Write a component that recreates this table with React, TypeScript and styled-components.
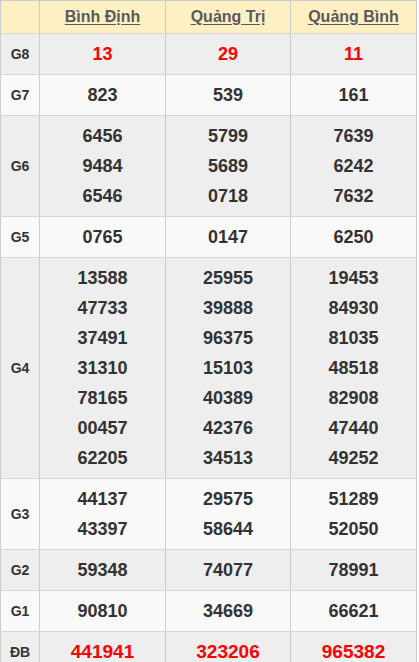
import React from "react";
import styled, { createGlobalStyle } from "styled-components";

const Global = createGlobalStyle`
  html, body { margin: 0; padding: 0; background: #fff; }
  body { font-family: "Liberation Sans", Arial, sans-serif; }
`;

const Table = styled.div`
  width: 417px;
  box-sizing: border-box;
  border-right: 1px solid #ccc;
  border-bottom: 1px solid #ccc;
`;

const Row = styled.div<{ $bg: string }>`
  display: grid;
  grid-template-columns: 39px 126px 125px 126px;
  background: ${(p) => p.$bg};
  border-top: 1px solid #d6d6d6;
`;

const HeaderRow = styled(Row)`
  height: 33px;
  box-sizing: border-box;
  border-top: 1px solid #ccc;
`;

const Cell = styled.div`
  border-left: 1px solid #ccc;
  display: flex;
  flex-direction: column;
  align-items: center;
  justify-content: center;
`;

const HeadCell = styled(Cell)`
  font-size: 16px;
  font-weight: bold;
  color: #5a5a5a;
`;

const HeadLink = styled.a`
  color: inherit;
  text-decoration: underline;
  text-underline-offset: 2px;
`;

const Label = styled(Cell)`
  font-size: 14px;
  font-weight: bold;
  color: #333;
`;

const NumCell = styled(Cell)`
  padding: 5px 0;
`;

const Num = styled.div<{ $red?: boolean; $big?: boolean }>`
  line-height: 30px;
  font-weight: bold;
  font-size: ${(p) => (p.$big ? "19px" : "18px")};
  color: ${(p) => (p.$red ? "#f00" : "#333")};
`;

type Prize = { label: string; cols: string[][]; red?: boolean; big?: boolean };

const prizes: Prize[] = [
  { label: "G8", cols: [["13"], ["29"], ["11"]], red: true },
  { label: "G7", cols: [["823"], ["539"], ["161"]] },
  {
    label: "G6",
    cols: [
      ["6456", "9484", "6546"],
      ["5799", "5689", "0718"],
      ["7639", "6242", "7632"],
    ],
  },
  { label: "G5", cols: [["0765"], ["0147"], ["6250"]] },
  {
    label: "G4",
    cols: [
      ["13588", "47733", "37491", "31310", "78165", "00457", "62205"],
      ["25955", "39888", "96375", "15103", "40389", "42376", "34513"],
      ["19453", "84930", "81035", "48518", "82908", "47440", "49252"],
    ],
  },
  {
    label: "G3",
    cols: [
      ["44137", "43397"],
      ["29575", "58644"],
      ["51289", "52050"],
    ],
  },
  { label: "G2", cols: [["59348"], ["74077"], ["78991"]] },
  { label: "G1", cols: [["90810"], ["34669"], ["66621"]] },
  { label: "ĐB", cols: [["441941"], ["323206"], ["965382"]], red: true, big: true },
];

const provinces = ["Bình Định", "Quảng Trị", "Quảng Bình"];

export default function App() {
  return (
    <>
      <Global />
      <Table>
        <HeaderRow $bg="#fff0c4">
          <Cell />
          {provinces.map((p) => (
            <HeadCell key={p}>
              <HeadLink href="#">{p}</HeadLink>
            </HeadCell>
          ))}
        </HeaderRow>
        {prizes.map((pr, i) => (
          <Row key={pr.label} $bg={i % 2 === 0 ? "#eeeeee" : "#f9f9f9"}>
            <Label>{pr.label}</Label>
            {pr.cols.map((col, j) => (
              <NumCell key={j}>
                {col.map((n, k) => (
                  <Num key={k} $red={pr.red} $big={pr.big}>
                    {n}
                  </Num>
                ))}
              </NumCell>
            ))}
          </Row>
        ))}
      </Table>
    </>
  );
}
